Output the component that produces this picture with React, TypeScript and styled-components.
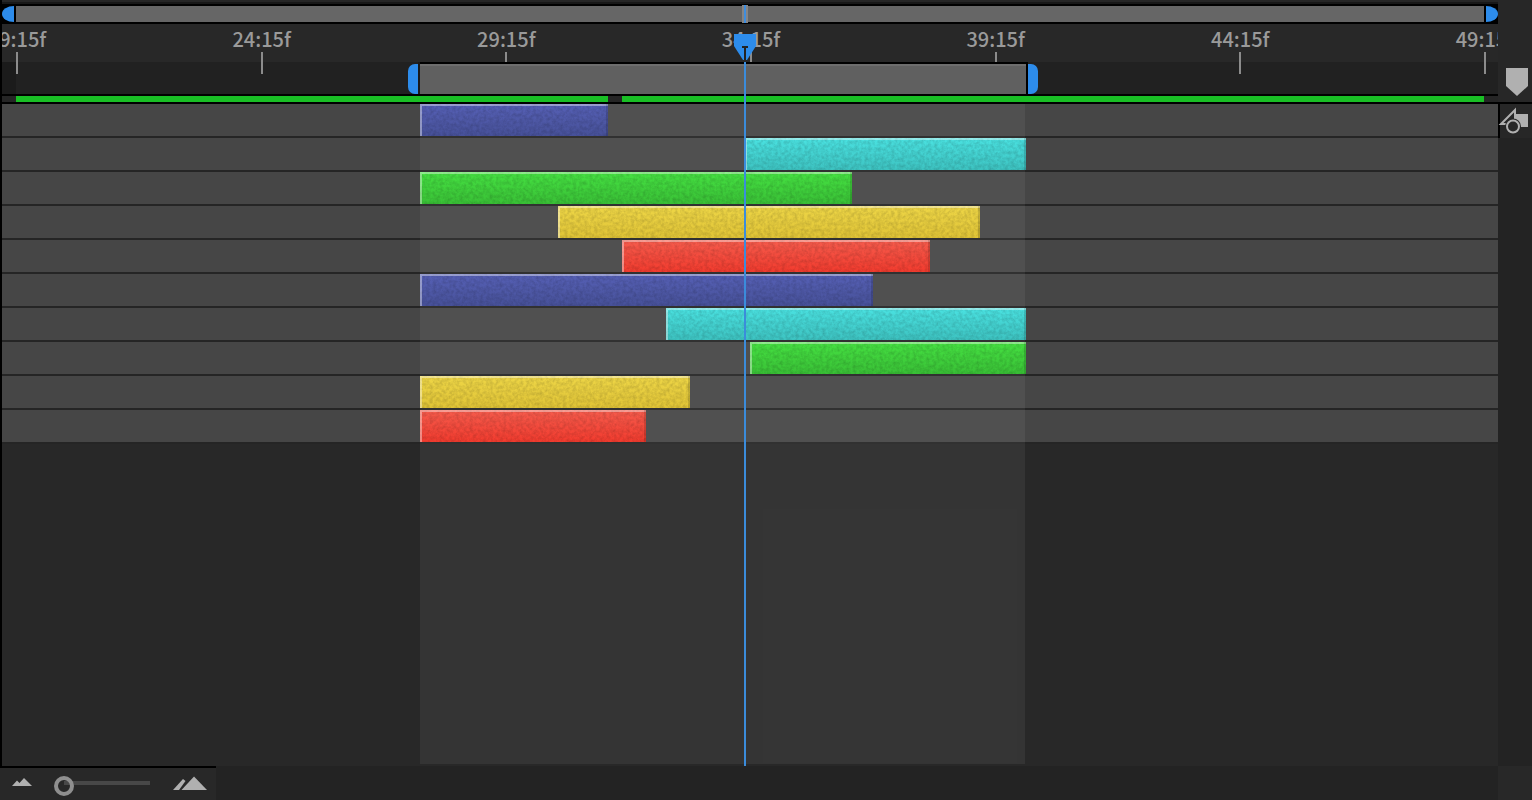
import React from "react";
import styled, { createGlobalStyle } from "styled-components";

/* The visible range of the timeline, in timeline units. */
const SPAN = 1496;
const pct = (units: number) => `${(units / SPAN) * 100}%`;

const PLAYHEAD = 743;
const WORK = { start: 418, length: 606 };

const LABELS = ["19:15f", "24:15f", "29:15f", "34:15f", "39:15f", "44:15f", "49:15f"];

type Tone = "indigo" | "cyan" | "green" | "yellow" | "red";

const TONES: Record<Tone, [string, string]> = {
  indigo: ["#5660b6", "#475199"],
  cyan: ["#4ae2e1", "#3dc3c1"],
  green: ["#46e242", "#39c036"],
  yellow: ["#eed647", "#e0c436"],
  red: ["#f65c4d", "#f23b2e"],
};

const LAYERS: { tone: Tone; start: number; length: number }[] = [
  { tone: "indigo", start: 418, length: 188 },
  { tone: "cyan", start: 743, length: 281 },
  { tone: "green", start: 418, length: 432 },
  { tone: "yellow", start: 556, length: 422 },
  { tone: "red", start: 620, length: 308 },
  { tone: "indigo", start: 418, length: 453 },
  { tone: "cyan", start: 664, length: 360 },
  { tone: "green", start: 748, length: 276 },
  { tone: "yellow", start: 418, length: 270 },
  { tone: "red", start: 418, length: 226 },
];

/* Cached preview frames, listed left to right. */
const CACHE = [
  { length: 14, cached: false },
  { length: 592, cached: true },
  { length: 14, cached: false },
  { length: 862, cached: true },
  { length: 14, cached: false },
];

const GlobalStyle = createGlobalStyle`
  *, *::before, *::after { box-sizing: border-box; }
  body { margin: 0; background: #232323; }
  button { border: 0; padding: 0; margin: 0; background: none; font: inherit; }
`;

const Panel = styled.div`
  display: flex;
  flex-direction: column;
  min-height: 100vh;
  background: #232323;
  color: #9a9a9a;
  font-family: "Noto Sans CJK SC", "Noto Sans", sans-serif;
`;

const Body = styled.div`
  display: flex;
  flex: 1;
`;

const Timeline = styled.main`
  position: relative;
  display: flex;
  flex: 1;
  flex-direction: column;
  min-width: 0;
  border-left: 2px solid #000;
  overflow: hidden;
`;

const Navigator = styled.div`
  position: relative;
  display: flex;
  gap: 2px;
  height: 24px;
  border-top: 2px solid #262626;
  border-bottom: 2px solid #000;
  padding-top: 2px;
  background: linear-gradient(#181818 2px, #000 2px);
`;

const NavHandle = styled.button<{ $side: "left" | "right" }>`
  width: 12px;
  height: 16px;
  margin-top: 2px;
  background: #2d8ceb;
  border-radius: ${(p) => (p.$side === "left" ? "12px 0 0 12px / 8px 0 0 8px" : "0 12px 12px 0 / 0 8px 8px 0")};
`;

const NavBar = styled.button`
  flex: 1;
  height: 16px;
  margin-top: 2px;
  background: #666;
`;

const NavMarker = styled.span`
  position: absolute;
  top: 3px;
  bottom: -1px;
  width: 6px;
  margin-left: -2px;
  background: linear-gradient(90deg, #858585 2px, #3f8ddd 2px, #3f8ddd 4px, #858585 4px);
`;

const Ruler = styled.div`
  display: grid;
  grid-template-columns: minmax(0, 1fr);
  grid-template-rows: 38px 32px;
  background: linear-gradient(#282828 38px, transparent 38px),
    linear-gradient(90deg, #1b1b1b 14px, #212121 14px);
`;

const Scale = styled.ol`
  grid-area: 1 / 1 / 3 / 2;
  display: flex;
  justify-content: space-between;
  margin: 0;
  padding: 0 12px 0 14px;
  list-style: none;
`;

const Tick = styled.li`
  display: flex;
  flex-direction: column;
  align-items: center;
  width: 2px;
  padding-top: 4px;
  font-size: 20px;
  font-weight: 500;
  line-height: 22px;
  white-space: nowrap;

  &::after {
    content: "";
    width: 2px;
    height: 22px;
    margin-top: 2px;
    background: #8c8c8c;
  }
`;

const WorkArea = styled.div`
  grid-area: 2 / 1 / 3 / 2;
  position: relative;
  display: flex;
`;

const WorkHandle = styled.button<{ $side: "left" | "right" }>`
  flex: none;
  width: 10px;
  height: 30px;
  margin-top: 2px;
  margin-left: ${(p) => (p.$side === "left" ? "-12px" : "2px")};
  margin-right: ${(p) => (p.$side === "left" ? "2px" : "0")};
  background: #2d8ceb;
  border-radius: ${(p) => (p.$side === "left" ? "7px 0 0 7px" : "0 7px 7px 0")};
`;

const WorkBar = styled.button`
  flex: none;
  height: 32px;
  border-top: 2px solid #000;
  background: linear-gradient(#6d6d6d 2px, #606060 2px);
  box-shadow: -2px 0 #1a1a1a, 2px 0 #000;
`;

const CacheBar = styled.div`
  display: flex;
  height: 10px;
  border-top: 2px solid #000;
  border-bottom: 2px solid #000;
  background: #222;
`;

const CacheSegment = styled.span<{ $length: number; $cached: boolean }>`
  flex: ${(p) => p.$length};
  background: ${(p) => (p.$cached ? "#19bf25" : "#252525")};
`;

const Tracks = styled.div`
  position: relative;
  flex: 1;
  background: #282828;
`;

const WorkShade = styled.div`
  position: absolute;
  top: 0;
  bottom: 2px;
  background: rgba(255, 255, 255, 0.06);
`;

const Track = styled.div`
  height: 34px;
  background: #464646;
  border-bottom: 2px solid #252525;
`;

const Clip = styled.button<{ $tone: Tone }>`
  position: relative;
  z-index: 1;
  display: block;
  height: 32px;
  overflow: hidden;
  background: ${(p) => `linear-gradient(${TONES[p.$tone][0]}, ${TONES[p.$tone][1]})`};

  &::after {
    content: "";
    position: absolute;
    inset: 0;
    box-shadow: inset -2px 0 rgba(0, 0, 0, 0.14), inset 2px 2px rgba(255, 255, 255, 0.4);
  }
`;

const Grain = styled.svg`
  display: block;
  width: 100%;
  height: 100%;
`;

const Playhead = styled.div`
  position: absolute;
  z-index: 2;
  top: 34px;
  bottom: 0;
  width: 2px;
  background: linear-gradient(transparent 28px, #3b8cdb 28px);
  pointer-events: none;
`;

const PlayheadHead = styled.svg`
  display: block;
  width: 22px;
  height: 28px;
  margin-left: -10px;
`;

const SideBar = styled.aside`
  display: flex;
  flex: none;
  flex-direction: column;
  width: 34px;
`;

const SideButton = styled.button<{ $height: number; $divided?: boolean }>`
  display: flex;
  align-items: flex-end;
  height: ${(p) => p.$height}px;
  background: #272727;
  border-left: ${(p) => (p.$divided ? "2px solid #000" : "0")};
  border-top: ${(p) => (p.$divided ? "2px solid #000" : "0")};
  padding-left: ${(p) => (p.$divided ? "0" : "8px")};
  padding-bottom: ${(p) => (p.$divided ? "4px" : "6px")};

  svg { display: block; flex: none; overflow: visible; }
`;

const Footer = styled.footer`
  display: flex;
  justify-content: space-between;
  height: 34px;
`;

const ZoomBar = styled.div`
  display: flex;
  align-items: flex-start;
  width: 216px;
  padding: 8px 8px 0 12px;
  background: #282828;
  border-top: 2px solid #000;
`;

const IconButton = styled.button`
  display: block;
  height: 16px;

  svg { display: block; }
`;

const ZoomSlider = styled.input`
  appearance: none;
  width: 96px;
  height: 20px;
  margin: 0 23px 0 22px;
  background: none;

  &::-webkit-slider-runnable-track {
    height: 4px;
    margin-top: -6px;
    background: linear-gradient(90deg, transparent 10px, #484848 10px);
  }

  &::-webkit-slider-thumb {
    appearance: none;
    width: 20px;
    height: 20px;
    margin-top: -5px;
    border: 4px solid #8f8f8f;
    border-radius: 50%;
    background: transparent;
  }
`;

const Corner = styled.div`
  width: 34px;
  background: #282828;
`;

function GrainTexture({ seed }: { seed: number }) {
  return (
    <Grain aria-hidden="true">
      <filter id={`grain-${seed}`} x="0" y="0" width="100%" height="100%" colorInterpolationFilters="sRGB">
        <feTurbulence type="fractalNoise" baseFrequency="0.3" numOctaves="3" seed={seed} />
        <feColorMatrix values="0 0 0 0 0  0 0 0 0 0  0 0 0 0 0  0.26 0 0 0 -0.08" />
      </filter>
      <rect width="100%" height="100%" filter={`url(#grain-${seed})`} />
    </Grain>
  );
}

export default function App() {
  return (
    <Panel>
      <GlobalStyle />
      <Body>
        <Timeline>
          <Navigator>
            <NavHandle $side="left" aria-label="Time navigator start" />
            <NavBar aria-label="Time navigator" />
            <NavHandle $side="right" aria-label="Time navigator end" />
            <NavMarker style={{ left: pct(PLAYHEAD - 1) }} />
          </Navigator>

          <Ruler>
            <Scale>
              {LABELS.map((label) => (
                <Tick key={label}>{label}</Tick>
              ))}
            </Scale>
            <WorkArea style={{ paddingLeft: pct(WORK.start) }}>
              <WorkHandle $side="left" aria-label="Work area start" />
              <WorkBar
                aria-label="Work area"
                style={{ width: `${(WORK.length / (SPAN - WORK.start)) * 100}%` }}
              />
              <WorkHandle $side="right" aria-label="Work area end" />
            </WorkArea>
          </Ruler>

          <CacheBar>
            {CACHE.map((part, i) => (
              <CacheSegment key={i} $length={part.length} $cached={part.cached} />
            ))}
          </CacheBar>

          <Tracks>
            {LAYERS.map((layer, i) => (
              <Track key={i}>
                <Clip
                  $tone={layer.tone}
                  aria-label={`Layer ${i + 1}`}
                  style={{ marginLeft: pct(layer.start), width: pct(layer.length) }}
                >
                  <GrainTexture seed={i + 1} />
                </Clip>
              </Track>
            ))}
            <WorkShade style={{ left: pct(WORK.start), width: pct(WORK.length - 1) }} />
          </Tracks>

          <Playhead style={{ left: pct(PLAYHEAD - 1) }}>
            <PlayheadHead viewBox="0 0 22 28">
              <path d="M0 0H22V12L13 26H9L0 12Z" fill="#2d8ceb" />
              <path d="M8 12H14V14H12V26H10V14H8Z" fill="#222" />
            </PlayheadHead>
          </Playhead>
        </Timeline>

        <SideBar>
          <SideButton $height={102} aria-label="Marker bin">
            <svg width="22" height="28" viewBox="0 0 22 28">
              <path d="M0 0H22V18L11 28L0 18Z" fill="#b0b0b0" />
            </svg>
          </SideButton>
          <SideButton $height={36} $divided aria-label="Composition button">
            <svg width="28" height="26" viewBox="0 0 28 26">
              <path d="M15 6H28V19H15Z" fill="#b0b0b0" />
              <path d="M15 2V16H1Z" fill="#272727" stroke="#b0b0b0" strokeWidth="2" />
              <circle cx="13" cy="18.500" r="8" fill="#272727" />
              <circle cx="13" cy="18.500" r="6" fill="#272727" stroke="#b0b0b0" strokeWidth="2" />
            </svg>
          </SideButton>
        </SideBar>
      </Body>

      <Footer>
        <ZoomBar>
          <IconButton aria-label="Zoom out">
            <svg width="20" height="16" viewBox="0 0 20 16">
              <path d="M0 10L5 4.500L7.500 7L12 2L20 10Z" fill="#b0b0b0" />
            </svg>
          </IconButton>
          <ZoomSlider type="range" min={0} max={100} defaultValue={0} aria-label="Zoom level" />
          <IconButton aria-label="Zoom in">
            <svg width="34" height="16" viewBox="0 0 34 16">
              <path d="M0 14L10 3L12.500 5L6 14Z" fill="#b0b0b0" />
              <path d="M8.500 14L21 0.500L34 14Z" fill="#b0b0b0" />
            </svg>
          </IconButton>
        </ZoomBar>
        <Corner />
      </Footer>
    </Panel>
  );
}
